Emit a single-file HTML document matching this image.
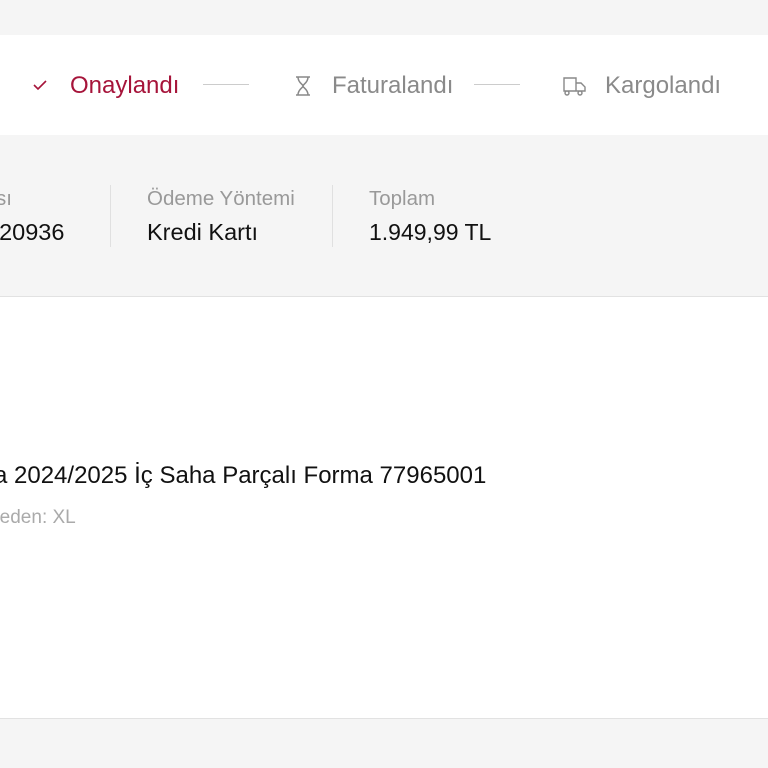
<!DOCTYPE html>
<html><head><meta charset="utf-8"><style>
*{margin:0;padding:0;box-sizing:border-box}
body{width:768px;height:768px;overflow:hidden;background:#f5f5f5;font-family:"Liberation Sans",sans-serif;position:relative}
.a{position:absolute;white-space:nowrap}
</style></head><body>
<div class="a" style="left:0;top:35px;width:768px;height:100px;background:#fff"></div>
<div class="a" style="left:0;top:296px;width:768px;height:423px;background:#fff;border-top:1px solid #e2e2e2;border-bottom:1px solid #e2e2e2"></div>

<svg class="a" style="left:32px;top:78px" width="16" height="14" viewBox="0 0 16 14"><path d="M2 7 L6 11 L14 3" fill="none" stroke="#a6143a" stroke-width="1.6"/></svg>
<div class="a" style="left:70px;top:72px;font-size:24px;color:#a6143a">Onaylandı</div>
<div class="a" style="left:203px;top:84px;width:46px;height:1px;background:#ccc"></div>
<svg class="a" style="left:294px;top:75px" width="18" height="22" viewBox="0 0 18 22"><path d="M2 2 H16 M2 20 H16 M4 2 C4 8 9 9 9 11 C9 13 4 14 4 20 M14 2 C14 8 9 9 9 11 C9 13 14 14 14 20" fill="none" stroke="#888" stroke-width="1.5"/></svg>
<div class="a" style="left:332px;top:72px;font-size:24px;color:#8a8a8a">Faturalandı</div>
<div class="a" style="left:474px;top:84px;width:46px;height:1px;background:#ccc"></div>
<svg class="a" style="left:562px;top:75px" width="26" height="22" viewBox="0 0 26 22"><path d="M2 3 H14 V16 H2 Z M14 8 H19 L23 12 V16 H14 M5 16 a2 2 0 1 0 .01 0 M18 16 a2 2 0 1 0 .01 0" fill="none" stroke="#888" stroke-width="1.4"/></svg>
<div class="a" style="left:605px;top:72px;font-size:24px;color:#8a8a8a">Kargolandı</div>

<div class="a" style="left:-4px;top:187px;font-size:20.5px;color:#999">sı</div>
<div class="a" style="left:-14px;top:219px;font-size:23.5px;color:#111">920936</div>
<div class="a" style="left:110px;top:185px;width:1px;height:62px;background:#e0e0e0"></div>
<div class="a" style="left:147px;top:187px;font-size:20.5px;color:#999">Ödeme Yöntemi</div>
<div class="a" style="left:147px;top:219px;font-size:23.5px;color:#111">Kredi Kartı</div>
<div class="a" style="left:332px;top:185px;width:1px;height:62px;background:#e0e0e0"></div>
<div class="a" style="left:369px;top:187px;font-size:20.5px;color:#999">Toplam</div>
<div class="a" style="left:369px;top:219px;font-size:23px;color:#111">1.949,99 TL</div>

<div class="a" style="left:-6px;top:462px;font-size:24px;color:#111">a 2024/2025 İç Saha Parçalı Forma 77965001</div>
<div class="a" style="left:-13px;top:507px;font-size:19px;color:#aaa">Beden: XL</div>
</body></html>
